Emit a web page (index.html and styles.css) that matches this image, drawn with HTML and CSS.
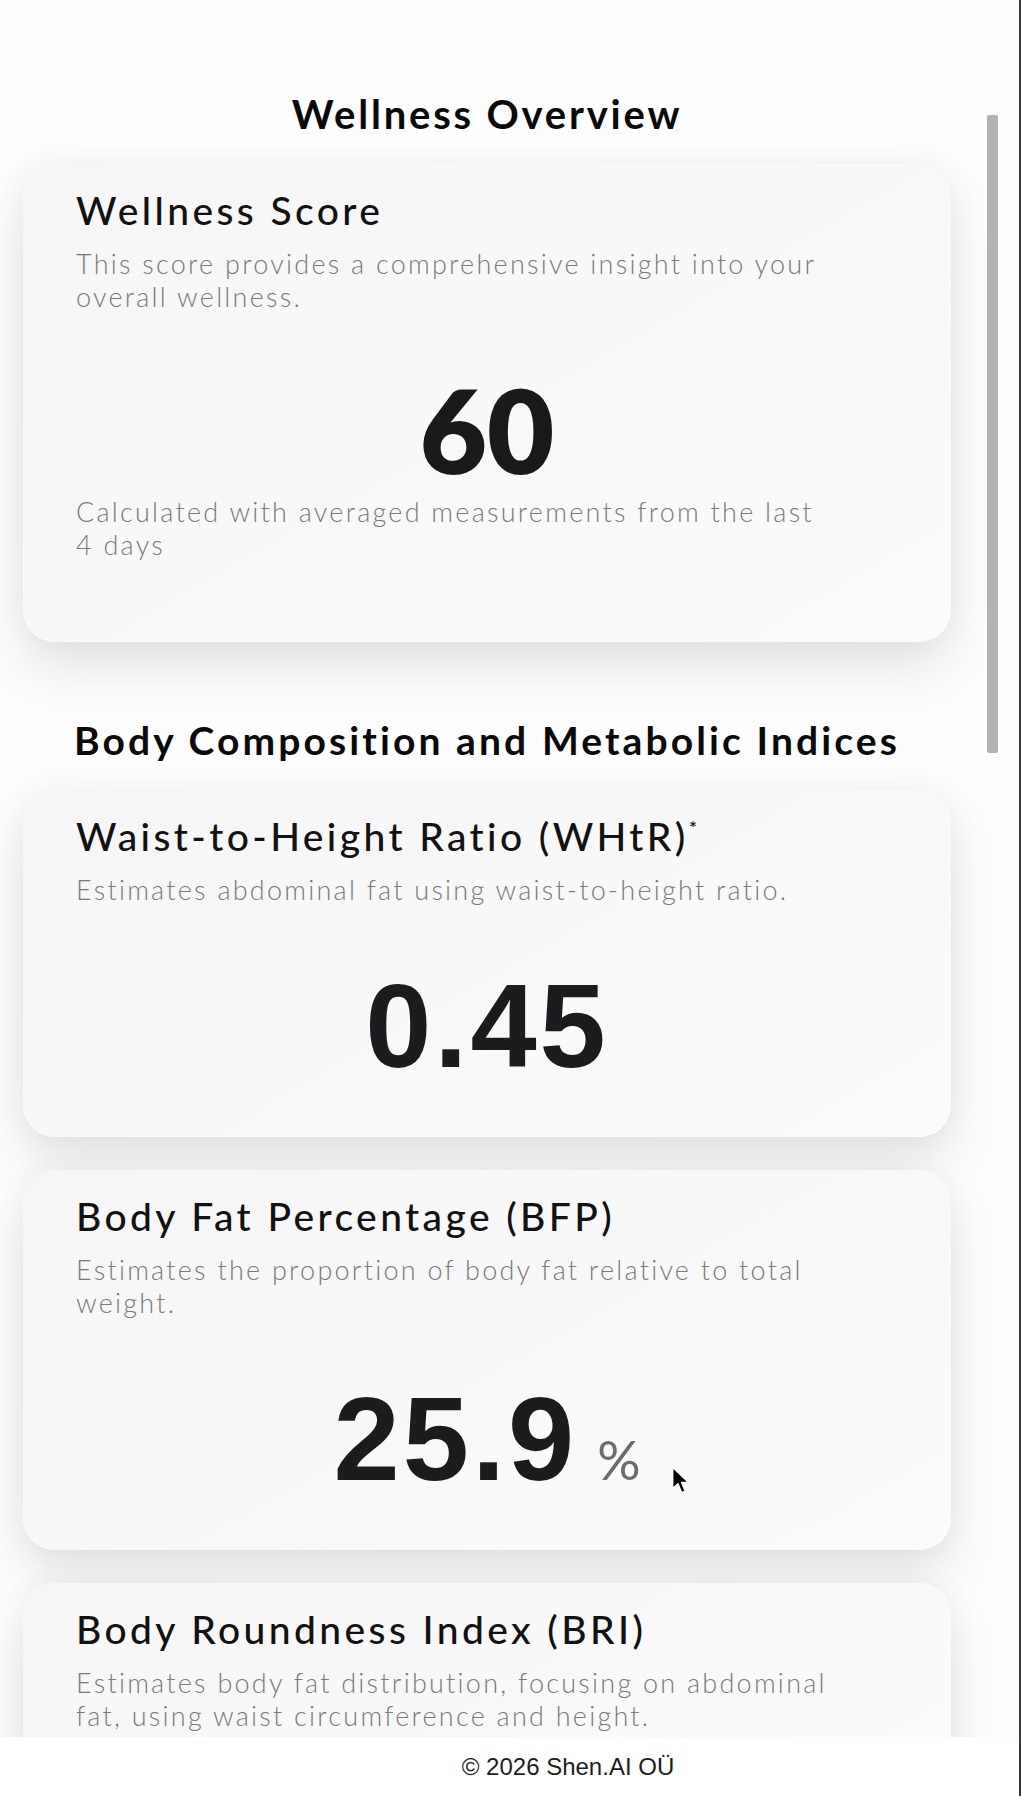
FILE: index.html
```html
<!DOCTYPE html>
<html lang="en">
<head>
<meta charset="utf-8">
<title>Wellness Overview</title>
<link rel="stylesheet" href="styles.css">
</head>
<body>
<div class="frame">
  <div class="viewport">
    <main class="content">
      <h1 class="page-title">Wellness Overview</h1>
      <section class="card">
        <h2 class="card-title">Wellness Score</h2>
        <p class="card-desc">This score provides a comprehensive insight into your overall wellness.</p>
        <div class="score">60</div>
        <p class="card-desc note">Calculated with averaged measurements from the last 4 days</p>
      </section>
      <h1 class="section-title">Body Composition and Metabolic Indices</h1>
      <section class="card">
        <h2 class="card-title">Waist-to-Height Ratio (WHtR)<sup class="star">*</sup></h2>
        <p class="card-desc">Estimates abdominal fat using waist-to-height ratio.</p>
        <div class="value">0.45</div>
      </section>
      <section class="card">
        <h2 class="card-title">Body Fat Percentage (BFP)</h2>
        <p class="card-desc">Estimates the proportion of body fat relative to total weight.</p>
        <div class="value">25.9<span class="unit">%</span></div>
      </section>
      <section class="card card-last">
        <h2 class="card-title">Body Roundness Index (BRI)</h2>
        <p class="card-desc">Estimates body fat distribution, focusing on abdominal fat, using waist circumference and height.</p>
      </section>
    </main>
    <div class="scrollbar"></div>
  </div>
  <footer class="footer">© 2026 Shen.AI OÜ</footer>
  <svg class="cursor" width="22" height="32" viewBox="0 0 20 28" aria-hidden="true">
    <path d="M1.5 1.5 L1.5 21 L6.3 16.6 L9.6 24.6 L13 23.2 L9.7 15.4 L16 15.4 Z" fill="#000" stroke="#fff" stroke-width="1.4" stroke-linejoin="round"/>
  </svg>
</div>
</body>
</html>
```

FILE: styles.css
```css
html, body {
  margin: 0;
  padding: 0;
  background: #ffffff;
}

body {
  font-family: "Lato", "Open Sans", sans-serif;
  color: #111;
}

.frame {
  position: relative;
  width: 1019px;
  height: 1796px;
  border-right: 2px solid #3a3a3a;
  display: flex;
  flex-direction: column;
  background: #fdfdfd;
}

.viewport {
  position: relative;
  height: 1737px;
  overflow: hidden;
  background: #fdfdfd;
}

.content {
  width: 928px;
  padding: 92px 0 0 23px;
}

.page-title {
  margin: 0 0 28px;
  font-size: 40px;
  line-height: 44px;
  font-weight: 700;
  letter-spacing: 2.8px;
  text-align: center;
  color: #0a0a0a;
}

.section-title {
  margin: 76px 0 28px;
  font-size: 39px;
  line-height: 44px;
  font-weight: 700;
  letter-spacing: 3.1px;
  text-align: center;
  white-space: nowrap;
  color: #0a0a0a;
}

.card {
  box-sizing: border-box;
  width: 928px;
  padding: 23px 53px 52px;
  border-radius: 32px;
  background: linear-gradient(150deg, #f6f6f6 0%, #f8f8f8 45%, #fbfbfb 100%);
  box-shadow: 0 26px 50px rgba(0, 0, 0, 0.1), 0 0 32px rgba(0, 0, 0, 0.045);
}

.card + .card {
  margin-top: 33px;
}

.card-title {
  margin: 0;
  font-size: 39px;
  line-height: 46px;
  font-weight: 500;
  letter-spacing: 3.4px;
  color: #121212;
}

.star {
  font-size: 20px;
  line-height: 0;
  vertical-align: 16px;
  letter-spacing: 0;
}

.card-desc {
  max-width: 756px;
  margin: 14px 0 0;
  font-size: 27px;
  line-height: 33px;
  font-weight: 300;
  letter-spacing: 2.25px;
  color: #7a7a7a;
}

.score {
  margin-top: 59px;
  font-size: 116px;
  line-height: 116px;
  font-weight: 800;
  text-align: center;
  color: #1a1a1a;
}

.note {
  margin: 7px 0 29px;
}

.value {
  margin-top: 61px;
  font-family: "Liberation Sans", Arial, sans-serif;
  font-size: 119px;
  line-height: 118px;
  font-weight: 700;
  letter-spacing: 3px;
  text-align: center;
  color: #1c1c1e;
}

.unit {
  margin-left: 20px;
  font-family: "Lato", sans-serif;
  font-size: 54px;
  line-height: 0;
  font-weight: 400;
  letter-spacing: 0;
  color: #6c6c6c;
}

.scrollbar {
  position: absolute;
  left: 987px;
  top: 115px;
  width: 11px;
  height: 638px;
  border-radius: 2px;
  background: #b2b2b2;
}

.footer {
  box-sizing: border-box;
  height: 59px;
  padding: 1px 0 0 117px;
  background: #ffffff;
  font-family: "Liberation Sans", Arial, sans-serif;
  font-size: 24px;
  line-height: 58px;
  text-align: center;
  color: #1d1d1d;
}

.cursor {
  position: absolute;
  left: 671px;
  top: 1465px;
}
```
